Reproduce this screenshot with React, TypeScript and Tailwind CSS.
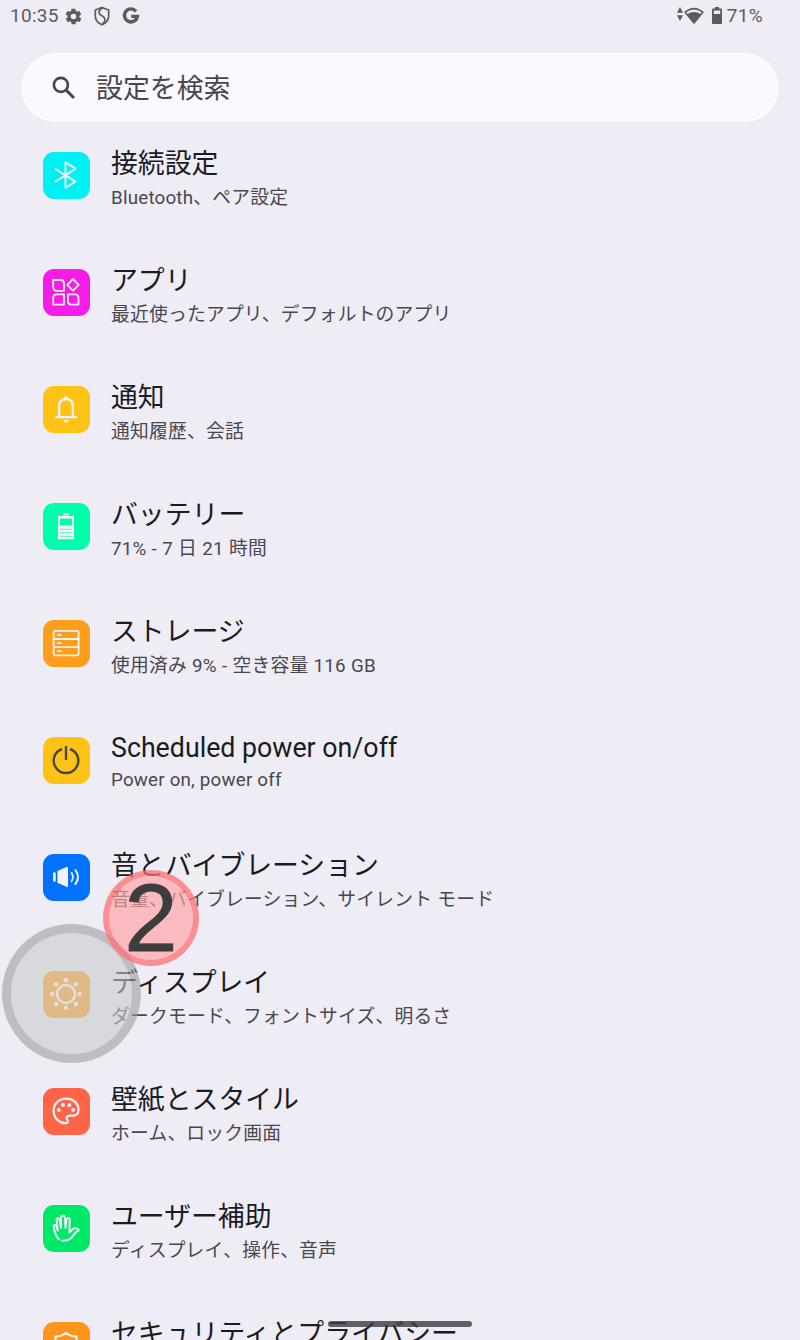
import React from "react";

type Setting = {
  title: string;
  summary: string;
  color: string;
  icon: React.ReactNode;
  latin?: boolean;
};

/* ===== Icons, all drawn on the 47px tile ===== */
function Tile({ color, children }: { color: string; children: React.ReactNode }) {
  return (
    <div className={`size-[47px] shrink-0 overflow-hidden rounded-[11px] ${color}`}>
      <svg viewBox="0 0 47 47" className="size-full" fill="none" stroke="#f4f1f8"
        strokeWidth="1.9" strokeLinejoin="round" strokeLinecap="round">
        {children}
      </svg>
    </div>
  );
}

const bluetooth = (
  <path d="M12.9 17.2 L22.5 23.4 L32.5 29.6 L22.5 35.8 V10.2 L32.5 16.6 L22.5 23.4 L12.9 29.2" />
);

const apps = (
  <g strokeWidth="1.8">
    <path d="M10.2 11 H17.5 Q21 11 21 14.5 V21.8 H14 Q10.2 21.8 10.2 18 Z" />
    <path d="M30 10 L35.7 15.8 L30 21.6 L24.3 15.8 Z" />
    <path d="M14 25.4 H21 V35.6 H10.2 V29 Q10.2 25.4 14 25.4 Z" />
    <path d="M24.9 25.4 H32 Q35.5 25.4 35.5 29 V35.6 H28.5 Q24.9 35.6 24.9 32 Z" />
  </g>
);

const bell = (
  <g strokeWidth="2.3" strokeLinecap="butt">
    <path d="M16.2 31 V20.5 C16.2 15.5 19 13 23 13 C27 13 29.8 15.5 29.8 20.5 V31" />
    <path d="M12.4 31.1 H34" />
    <path d="M20.4 34 H25.6 L24.6 36.4 H21.6 Z M21 12.5 L22 10.2 H24 L25 12.5 Z" fill="#f4f1f8" stroke="none" />
  </g>
);

const battery = (
  <g strokeLinecap="butt" strokeLinejoin="miter">
    <path d="M20 10.2 H26 V13 H31 V36.3 H15 V13 H20 Z" fill="#f4f1f8" stroke="none" />
    <path d="M17 15.4 H29 V22.6 H17 Z" fill="#00ffab" stroke="none" />
    <path d="M19.5 12.4 H26.5" stroke="#00ffab" strokeWidth="0.7" />
    <path d="M17 26.3 H29 M17 29.7 H29 M17 33.3 H29" stroke="#00ffab" strokeWidth="0.7" />
  </g>
);

const storage = (
  <g strokeWidth="1.8">
    <rect x="10.6" y="10.8" width="25" height="24.5" rx="1.5" />
    <path d="M10.6 19 H35.6 M10.6 27.2 H35.6" />
    <path d="M14.8 14.9 H17.8 M14.8 23.1 H17.8 M14.8 31.2 H17.8" />
  </g>
);

const power = (
  <g stroke="#494741" strokeWidth="2.4" strokeLinecap="butt">
    <path d="M19 12 A12.3 12.3 0 1 0 27 12" />
    <path d="M23 9 V23" />
  </g>
);

const sound = (
  <g>
    <path d="M14.4 17 L23.4 13 Q25 12.5 25 14 V32 Q25 33.4 23.4 32.8 L14.4 28.8 Z" fill="#f4f1f8" stroke="none" />
    <path d="M11.4 19.5 V26.5" strokeWidth="2.7" />
    <path d="M28.6 18.8 Q31.2 23 28.6 27.3" strokeWidth="1.7" />
    <path d="M32.4 16 Q37.6 23 32.4 30.2" strokeWidth="2" />
  </g>
);

const sun = (
  <g fill="#ffffff" stroke="none">
    <circle cx="23" cy="23" r="9" fill="none" stroke="#ffffff" strokeWidth="2.4" />
    <circle cx="23" cy="9.3" r="2.2" /><circle cx="23" cy="36.7" r="2.2" />
    <circle cx="9.3" cy="23" r="2.2" /><circle cx="36.7" cy="23" r="2.2" />
    <circle cx="13.1" cy="13.3" r="2.2" /><circle cx="32.9" cy="13.3" r="2.2" />
    <circle cx="13.1" cy="33" r="2.2" /><circle cx="32.9" cy="33" r="2.2" />
  </g>
);

const palette = (
  <g>
    <path d="M23.3 10.6 C15.5 10.6 10.6 16 10.6 22.8 C10.6 30.5 16.8 35.2 22.5 35.2 C24.7 35.2 25.6 33.6 24.3 31.9 C22.7 29.6 23.9 27.6 26.8 27.6 H30 C33.5 27.6 35.5 25.2 35.5 21.5 C35.3 15 30 10.6 23.3 10.6 Z" strokeWidth="2.2" />
    <g fill="#f4f1f8" stroke="none">
      <circle cx="15.8" cy="22" r="2" /><circle cx="19.9" cy="16.9" r="2" />
      <circle cx="26.3" cy="16.9" r="2" /><circle cx="30.2" cy="22" r="2" />
    </g>
  </g>
);

const hand = (
  <path strokeWidth="1.9" d="M16.2 34.5 C12 31.5 12 27 10.5 21.3 C10.2 19.7 12.6 19.3 13.1 20.9 L14.8 25.7 L13.5 14.7 C13.3 12.9 15.9 12.6 16.3 14.3 L18.1 23 V12.1 C18.1 10 21.7 10 21.9 12.1 L22.5 23 L23.7 14.2 C24.2 12.5 26.9 12.7 26.8 14.5 L26.3 27.3 C28 27 29 23.7 31.5 23.3 C33 22.9 35.9 24 35.7 25.2 C34.7 26.4 32.5 26.8 31.3 29 C29 33 25.5 36.5 18.8 35.6" />
);

const security = (
  <path strokeWidth="2" d="M23 11 Q18.5 14.4 12.5 14.6 V24 Q13 32 23 36 Q33 32 33.5 24 V14.6 Q27.5 14.4 23 11 Z" />
);

const settings: Setting[] = [
  { title: "接続設定", summary: "Bluetooth、ペア設定", color: "bg-[#00f0f4]", icon: bluetooth },
  { title: "アプリ", summary: "最近使ったアプリ、デフォルトのアプリ", color: "bg-[#f41ce6]", icon: apps },
  { title: "通知", summary: "通知履歴、会話", color: "bg-[#ffc316]", icon: bell },
  { title: "バッテリー", summary: "71% - 7 日 21 時間", color: "bg-[#00ffab]", icon: battery },
  { title: "ストレージ", summary: "使用済み 9% - 空き容量 116 GB", color: "bg-[#ff9e1b]", icon: storage },
  { title: "Scheduled power on/off", summary: "Power on, power off", color: "bg-[#ffc316]", icon: power, latin: true },
  { title: "音とバイブレーション", summary: "音量、バイブレーション、サイレント モード", color: "bg-[#0072ff]", icon: sound },
  { title: "ディスプレイ", summary: "ダークモード、フォントサイズ、明るさ", color: "bg-[#ff9e1b]", icon: sun },
  { title: "壁紙とスタイル", summary: "ホーム、ロック画面", color: "bg-[#ff6446]", icon: palette },
  { title: "ユーザー補助", summary: "ディスプレイ、操作、音声", color: "bg-[#00e868]", icon: hand },
  { title: "セキュリティとプライバシー", summary: "アプリのセキュリティ、画面ロック", color: "bg-[#ff961b]", icon: security },
];

function StatusBar() {
  return (
    <header className="flex h-8 items-center pr-[37px] pl-[10px] text-[19px] leading-8 text-[#5c5b61]">
      <span className="w-[54px] tracking-[0.3px]">10:35</span>
      <svg viewBox="0 0 24 24" className="size-[19px]" fill="currentColor">
        <path fillRule="evenodd" d="M19.4 13a7.500 7.500 0 0 0 0-2l2.100-1.600a.5.5 0 0 0 .1-.6l-2-3.500a.5.5 0 0 0-.6-.2l-2.500 1a7.300 7.300 0 0 0-1.700-1l-.4-2.600a.5.5 0 0 0-.5-.4h-4a.5.5 0 0 0-.5.4l-.4 2.600a7.700 7.700 0 0 0-1.700 1l-2.500-1a.5.5 0 0 0-.6.2l-2 3.500a.5.5 0 0 0 .1.6L4.600 11a8 8 0 0 0 0 2l-2.100 1.600a.5.5 0 0 0-.1.6l2 3.500c.1.2.4.3.6.2l2.500-1a7.300 7.300 0 0 0 1.700 1l.4 2.600c0 .2.2.4.5.4h4c.2 0 .5-.2.5-.4l.4-2.600a7.700 7.700 0 0 0 1.700-1l2.500 1c.2.1.5 0 .6-.2l2-3.500a.5.5 0 0 0-.1-.6zM12 15.500a3.500 3.500 0 1 1 0-7 3.500 3.500 0 0 1 0 7z" />
      </svg>
      <svg viewBox="0 0 16 20" className="ml-[11px] h-5 w-4" fill="none" stroke="currentColor" strokeWidth="1.7">
        <path d="M8 1.500 L14.700 4 V10 C14.700 14 12 17 8 18.800 C4 17 1.300 14 1.300 10 V4 Z" />
        <path d="M8.500 2 C3.500 5 4 7.500 8 9.800 C12 12 12 15 8.500 18" />
      </svg>
      <svg viewBox="0 0 18 18" className="ml-3 size-[18px]" fill="none" stroke="currentColor" strokeWidth="3.400">
        <path d="M14 4.300 A6.500 6.500 0 1 0 15.400 9.400 H9.200" />
      </svg>
      <div className="ml-auto flex items-center">
        <svg viewBox="0 0 8 16" className="h-4 w-2 -translate-y-[2px]" fill="currentColor">
          <path d="M4 1 L7 6.800 H1 Z M1 9.200 H7 L4 15 Z" />
        </svg>
        <svg viewBox="0 0 20 18" className="h-[18px] w-5" fill="none">
          <path d="M1.200 5.200 Q10 -2 18.800 5.200 L10 16 Z" stroke="currentColor" strokeWidth="1.600" strokeLinejoin="round" />
          <path d="M3.200 7.300 Q10 2.800 16.800 7.300 L10 16 Z" fill="currentColor" stroke="none" />
        </svg>
        <svg viewBox="0 0 10 18" className="ml-2 h-[18px] w-[10px] -translate-y-px" fill="currentColor">
          <path fillRule="evenodd" d="M3 1 H7 V2.600 H9 Q10 2.600 10 3.600 V17 Q10 18 9 18 H1 Q0 18 0 17 V3.600 Q0 2.600 1 2.600 H3 Z M1.800 4.600 V8 H8.200 V4.600 Z" />
        </svg>
        <span className="ml-[5px] tracking-[0.3px]">71%</span>
      </div>
    </header>
  );
}

function SearchBar() {
  return (
    <div className="mx-[21px] mt-[21px] flex h-[69px] items-center rounded-full bg-[#faf9ff] pl-[28px] text-[#46464d]">
      <svg viewBox="0 0 24 24" className="size-[30px]" fill="none" stroke="currentColor" strokeWidth="2.100">
        <circle cx="9.500" cy="9.500" r="5.600" />
        <path d="M13.700 13.700 L20 20" strokeWidth="2.300" />
      </svg>
      <span className="mt-[3px] ml-[17px] text-[26.9px]">設定を検索</span>
    </div>
  );
}

function SettingRow({ title, summary, color, icon, latin }: Setting) {
  return (
    <li className="flex h-[117px] pt-[10px] pl-[43px]">
      <Tile color={color}>{icon}</Tile>
      <div className={`ml-[21px] whitespace-nowrap ${latin ? "-mt-[7px]" : "-mt-[6px]"}`}>
        <p className={`leading-9 text-[#1a1b23] ${latin ? "text-[26.75px]" : "text-[26.85px]"}`}>{title}</p>
        <p className={`leading-7 text-[#484850] ${latin ? "text-[18.75px] tracking-[0.2px]" : "mt-[2px] text-[18.8px] tracking-[0.2px] [word-spacing:0.3px]"}`}>{summary}</p>
      </div>
    </li>
  );
}

export default function App() {
  return (
    <div lang="ja" className="relative h-[1340px] w-[800px] overflow-hidden bg-[#eeecf5] font-[Roboto,'Noto_Sans_CJK_JP',sans-serif]">
      <StatusBar />
      <SearchBar />
      <ul className="mt-5">
        {settings.map((s) => <SettingRow key={s.title} {...s} />)}
      </ul>

      {/* tap indicator and step marker */}
      <div className="absolute top-[924px] left-[2px] size-[139px] rounded-full border-[9px] border-[#9e9e9e]/60 bg-[#cbcbcb]/60 bg-clip-padding" />
      <div className="absolute top-[870px] left-[103px] flex size-24 items-center justify-center rounded-full border-[6px] border-[#ff6f71]/75 bg-[#ffa2a2]/65 bg-clip-padding">
        <span className="font-['Liberation_Sans',Arial,sans-serif] text-[96px] leading-none text-[#3c3d3c] [-webkit-text-stroke:0.8px_#3c3d3c]">2</span>
      </div>

      {/* gesture bar */}
      <div className="absolute top-[1321px] left-[328px] h-[6px] w-36 rounded-full bg-[#3c3c40]/80" />
    </div>
  );
}
